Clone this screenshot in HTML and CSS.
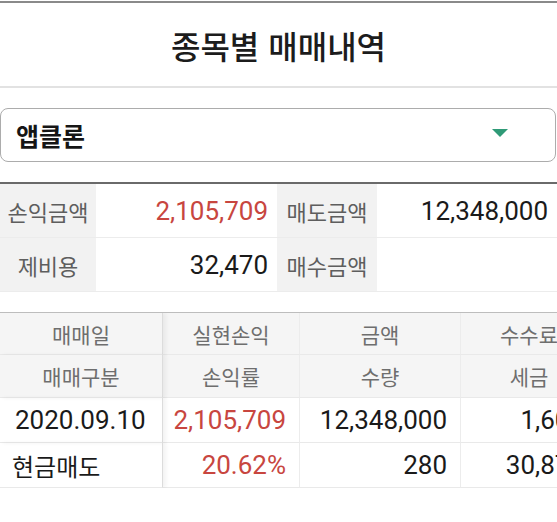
FILE: index.html
```html
<!DOCTYPE html>
<html lang="ko">
<head>
<meta charset="utf-8">
<title>종목별 매매내역</title>
<link rel="stylesheet" href="styles.css">
</head>
<body>
<div class="topline"></div>
<header class="header"><h1 class="title">종목별 매매내역</h1></header>

<div class="select-wrap">
  <div class="select">
    <span class="select-text">앱클론</span>
    <span class="caret"></span>
  </div>
</div>

<div class="summary">
  <div class="s-label">손익금액</div>
  <div class="s-value red">2,105,709</div>
  <div class="s-label">매도금액</div>
  <div class="s-value">12,348,000</div>
  <div class="s-label last">제비용</div>
  <div class="s-value last">32,470</div>
  <div class="s-label last">매수금액</div>
  <div class="s-value last"></div>
</div>

<div class="table-wrap">
  <div class="grid">
    <div class="th c1">매매일</div>
    <div class="th">실현손익</div>
    <div class="th">금액</div>
    <div class="th">수수료</div>
    <div class="th c1 h2">매매구분</div>
    <div class="th h2">손익률</div>
    <div class="th h2">수량</div>
    <div class="th h2">세금</div>
    <div class="td c1 left num">2020.09.10</div>
    <div class="td num red">2,105,709</div>
    <div class="td num">12,348,000</div>
    <div class="td num">1,600</div>
    <div class="td c1 left kr">현금매도</div>
    <div class="td num red">20.62%</div>
    <div class="td num">280</div>
    <div class="td num">30,870</div>
  </div>
</div>
</body>
</html>
```

FILE: styles.css
```css
* { box-sizing: border-box; }
html, body { margin: 0; padding: 0; background: #fff; }
body {
  width: 557px;
  height: 522px;
  overflow: hidden;
  font-family: "Noto Sans CJK KR", "Noto Sans", sans-serif;
  color: #1a1a1a;
}
.topline {
  margin-top: 1px;
  height: 2px;
  background: #8a8a8a;
}
.header {
  height: 85px;
  border-bottom: 2px solid #e2e2e2;
  display: flex;
  align-items: center;
  justify-content: center;
}
.title {
  margin: 0;
  font-size: 32px;
  font-weight: 500;
  letter-spacing: 0;
  color: #1c1c1c;
}
.select-wrap {
  padding: 20px 1px 20px 0;
}
.select {
  height: 54px;
  border: 1.5px solid #acacac;
  border-radius: 8px;
  display: flex;
  align-items: center;
  justify-content: space-between;
  padding: 0 47px 0 15px;
}
.select-text {
  font-size: 25px;
  font-weight: 700;
  color: #151515;
}
.caret {
  width: 0;
  height: 0;
  border-left: 8px solid transparent;
  border-right: 8px solid transparent;
  border-top: 8px solid #2f9a77;
  margin-top: -4px;
}
.summary {
  border-top: 2px solid #6a6a6a;
  display: grid;
  grid-template-columns: 96px 181px 100px 1fr;
  grid-auto-rows: 54px;
}
.s-label, .s-value {
  border-bottom: 1px solid #ececec;
  display: flex;
  align-items: center;
}
.s-label {
  background: #f2f2f2;
  justify-content: center;
  font-size: 22px;
  color: #5e5e5e;
}
.s-value {
  justify-content: flex-end;
  padding-right: 9px;
  font-family: Roboto, "Liberation Sans", sans-serif;
  font-size: 26px;
  color: #1a1a1a;
}
.red { color: #c8463f !important; }
.table-wrap {
  margin-top: 20px;
  overflow: hidden;
  border-top: 1px solid #bdbdbd;
}
.grid {
  display: grid;
  width: 598px;
  grid-template-columns: 163px 137px 161px 137px;
  grid-template-rows: 42px 43px 45px 45px;
}
.th, .td {
  border-bottom: 1px solid #e9e9e9;
  border-right: 1px solid #ececec;
  display: flex;
  align-items: center;
}
.th {
  background: #f5f5f5;
  justify-content: center;
  font-size: 21px;
  color: #6e6e6e;
}
.td {
  justify-content: flex-end;
  padding-right: 13px;
  font-family: Roboto, "Liberation Sans", sans-serif;
  font-size: 26px;
  color: #1a1a1a;
}
.c1 {
  border-right: 1px solid #dcdcdc;
  box-shadow: 3px 0 4px rgba(0, 0, 0, 0.05);
  position: relative;
  z-index: 1;
}
.td.left {
  justify-content: flex-start;
  padding-left: 15px;
}
.td.kr {
  font-family: "Noto Sans CJK KR", sans-serif;
  font-size: 24px;
  padding-left: 12px;
}
```
